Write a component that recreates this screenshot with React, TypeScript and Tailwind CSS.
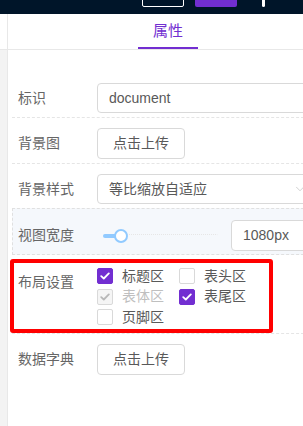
import { ChevronDown } from "lucide-react";

const font = { fontFamily: '"Liberation Sans", "Noto Sans CJK SC", sans-serif' };

function Check({ checked, disabled }: { checked?: boolean; disabled?: boolean }) {
  const box = disabled
    ? "border-[#d9d9d9] bg-[#f5f5f5]"
    : checked
      ? "border-[#722ed1] bg-[#722ed1]"
      : "border-[#d9d9d9] bg-white";
  return (
    <span className={`flex h-4 w-4 shrink-0 items-center justify-center rounded-[2px] border ${box}`}>
      {checked ? (
        <svg width="10" height="8" viewBox="0 0 10 8" fill="none">
          <path
            d="M1.2 4.1 3.8 6.5 8.8 1.4"
            stroke={disabled ? "#b8b8b8" : "#fff"}
            strokeWidth="1.8"
            strokeLinecap="round"
            strokeLinejoin="round"
          />
        </svg>
      ) : null}
    </span>
  );
}

function Option({ label, checked, disabled }: { label: string; checked?: boolean; disabled?: boolean }) {
  return (
    <div className="flex h-[20.5px] items-center gap-[9px]">
      <Check checked={checked} disabled={disabled} />
      <span className={`text-[14px] ${disabled ? "text-[#bfbfbf]" : "text-[#595959]"}`}>{label}</span>
    </div>
  );
}

function Label({ children }: { children: string }) {
  return <span className="w-[79px] shrink-0 text-[14px] text-[#666]">{children}</span>;
}

function UploadButton() {
  return (
    <button
      type="button"
      className="flex h-[31px] w-[88px] items-center justify-center rounded-[4px] border border-[#d9d9d9] bg-white text-[14px] text-[#595959]"
    >
      点击上传
    </button>
  );
}

export default function App() {
  return (
    <div className="h-[426px] w-[303px] overflow-hidden bg-white" style={font}>
      {/* top bar, mostly scrolled out of view */}
      <div className="flex h-[14px] items-end overflow-hidden bg-[#001529] pb-[7px] pl-[142px]">
        <div className="flex h-[24px] w-[42px] shrink-0 items-center justify-center rounded-[2px] border border-white text-[12px] text-white">
          预览
        </div>
        <div className="ml-[11px] flex h-[24px] w-[42px] shrink-0 items-center justify-center rounded-[2px] bg-[#722ed1] text-[12px] text-white">
          保存
        </div>
        <div className="ml-[25px] h-[10px] w-[3px] shrink-0 rounded-full bg-white" />
      </div>

      <div className="flex h-[412px]">
        <div className="flex w-[7px] shrink-0 flex-col">
          <div className="h-[36px] border-b border-[#e8e8e8] bg-white" />
          <div className="flex-1 bg-[#f3f3f3]" />
        </div>

        <div className="w-[321px] shrink-0 border-l border-[#e8e8e8]">
          {/* tabs */}
          <div className="flex h-[36px] justify-center border-b border-[#e8e8e8]">
            <div className="relative flex h-full w-[60px] items-center justify-center pb-[1px] text-[15px] text-[#722ed1]">
              属性
              <span className="absolute bottom-0 left-0 h-[2px] w-full bg-[#722ed1]" />
            </div>
          </div>

          {/* form */}
          <div className="px-[4px] pt-[23px]">
            <div className="flex items-center border-b border-dashed border-[#e5e5e5] px-[6px] pb-[4px] pt-[10px]">
              <Label>标识</Label>
              <div className="flex h-[30px] flex-1 items-center rounded-[4px] border border-[#d9d9d9] px-[11px] text-[14px] text-[#595959]">
                document
              </div>
            </div>

            <div className="flex items-center border-b border-dashed border-[#e5e5e5] px-[6px] pb-[4px] pt-[10px]">
              <Label>背景图</Label>
              <UploadButton />
            </div>

            <div className="flex items-center px-[6px] pb-[4px] pt-[10px]">
              <Label>背景样式</Label>
              <div className="flex h-[30px] flex-1 items-center justify-between rounded-[4px] border border-[#d9d9d9] pl-[11px] pr-[10px] text-[14px] text-[#595959]">
                等比缩放自适应
                <ChevronDown size={14} strokeWidth={1.2} className="text-[#bfbfbf]" />
              </div>
            </div>

            <div className="flex items-center border border-dashed border-[#e0e0e0] bg-[#f5f8fc] px-[5px] pb-[3px] pt-[11px]">
              <Label>视图宽度</Label>
              <div className="relative ml-[6px] flex h-[14px] w-[115px] shrink-0 items-center">
                <div className="h-[4px] w-full rounded-full border-t border-dotted border-[#e6e6e6]" />
                <div className="absolute left-0 h-[4px] w-[18px] rounded-full bg-[#91caff]" />
                <div className="absolute left-[11px] h-[14px] w-[14px] rounded-full border-2 border-[#91caff] bg-white" />
              </div>
              <div className="ml-[13px] flex h-[31px] flex-1 items-center rounded-[4px] border border-[#d9d9d9] bg-white px-[11px] text-[14px] text-[#595959]">
                1080px
              </div>
            </div>

            <div className="relative flex items-start border-b border-dashed border-[#e5e5e5] px-[6px] pb-[5px] pt-[11px]">
              <span className="mt-[6px] w-[79px] shrink-0 text-[14px] text-[#666]">布局设置</span>
              <div className="grid grid-cols-[82px_auto]">
                <Option label="标题区" checked />
                <Option label="表头区" />
                <Option label="表体区" checked disabled />
                <Option label="表尾区" checked />
                <Option label="页脚区" />
              </div>
              <div className="pointer-events-none absolute left-[-2px] top-[4px] h-[74px] w-[263px] rounded-[3px] border-4 border-[#ff0000]" />
            </div>

            <div className="flex items-center px-[6px] pb-[4px] pt-[10px]">
              <Label>数据字典</Label>
              <UploadButton />
            </div>
          </div>
        </div>
      </div>
    </div>
  );
}
